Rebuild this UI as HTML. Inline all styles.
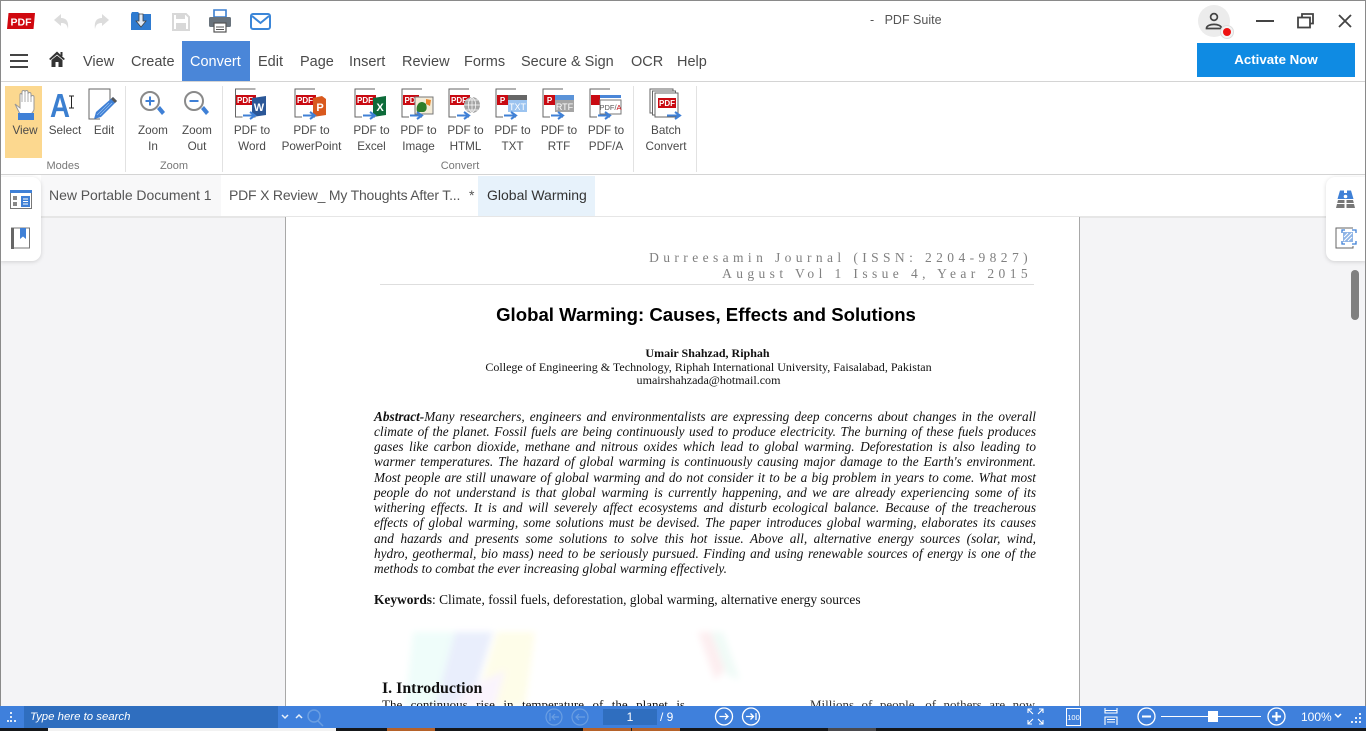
<!DOCTYPE html>
<html><head><meta charset="utf-8">
<style>
html,body{margin:0;padding:0;width:1366px;height:731px;overflow:hidden;background:#fff;font-family:"Liberation Sans",sans-serif;color:#444}
.a{position:absolute}
.m{position:absolute;top:53px;font-size:14.5px;line-height:18px;color:#4a4a4a;white-space:nowrap}
.l{position:absolute;font-size:11.7px;line-height:16px;color:#4a4a4a;text-align:center;width:80px;white-space:nowrap;margin-top:1px}
.g{position:absolute;top:159px;font-size:11px;line-height:14px;color:#777;text-align:center;width:80px}
.v{position:absolute;top:86px;width:1px;height:86px;background:#e2e2e2}
.t{position:absolute;top:186px;font-size:14px;line-height:18px;color:#555;white-space:nowrap}
.p{position:absolute;left:374px;width:662px;font:italic 13.3px/15.2px "Liberation Serif",serif;color:#111;text-align:justify;text-align-last:justify;white-space:nowrap;margin-top:-.5px}
.c{position:absolute;left:286px;width:845px;text-align:center;font-family:"Liberation Serif",serif;color:#111;font-size:12.05px;line-height:14px;white-space:nowrap}
svg{position:absolute;overflow:visible}
svg text{font-family:"Liberation Sans",sans-serif}
</style></head>
<body>
<!-- window frame -->
<div class="a" style="left:0;top:0;width:1366px;height:1px;background:#8a8a8a;z-index:9"></div>
<div class="a" style="left:0;top:0;width:1px;height:706px;background:#8a8a8a;z-index:9"></div>
<div class="a" style="left:1365px;top:0;width:1px;height:706px;background:#8a8a8a;z-index:9"></div>

<!-- quick access -->
<svg style="left:7px;top:13px" width="28" height="17"><path d="M1.500 0H28L26.500 16H0Z" fill="#d0080f"/><text x="14" y="12.500" font-size="10.500" font-weight="bold" fill="#fff" text-anchor="middle">PDF</text></svg>
<svg style="left:53px;top:13px" width="18" height="18"><path d="M1 7L8 1V5C13 5 16 8 15 16C14 11 12 10 8 10V13Z" fill="#dcdcdc"/></svg>
<svg style="left:92px;top:13px" width="18" height="18"><path d="M17 7L10 1V5C5 5 2 8 3 16C4 11 6 10 10 10V13Z" fill="#dcdcdc"/></svg>
<svg style="left:130px;top:11px" width="22" height="20"><path d="M1 3V19H21V3H10L8 1H2Z" fill="#2f7bd0"/><path d="M9 3H13V10H16L11 16L6 10H9Z" fill="#dfe9f5" stroke="#444" stroke-width=".8"/></svg>
<svg style="left:172px;top:13px" width="18" height="18"><path d="M1 1H14L17 4V17H1Z" fill="none" stroke="#d8d8d8" stroke-width="2"/><rect x="4" y="1" width="9" height="5" fill="#d8d8d8"/><rect x="4" y="10" width="10" height="6" fill="#d8d8d8"/></svg>
<svg style="left:209px;top:9px" width="23" height="24"><path d="M5 1H17V8H5Z" fill="#fff" stroke="#3b7fd0" stroke-width="1.600"/><rect x="0" y="8" width="22" height="10" rx="1.500" fill="#69737c"/><rect x="5" y="14" width="12" height="9" fill="#fff" stroke="#555" stroke-width="1.200"/><path d="M7 18H15M7 20.500H15" stroke="#555"/></svg>
<svg style="left:250px;top:12px" width="22" height="19"><rect x="1" y="2" width="19" height="15" rx="2" fill="none" stroke="#3b86d8" stroke-width="2"/><path d="M2 4L10.500 11L19 4" fill="none" stroke="#3b86d8" stroke-width="2"/></svg>

<div class="a" style="left:870px;top:12px;font-size:12.500px;line-height:16px;color:#555;white-space:pre">-   PDF Suite</div>

<!-- window controls -->
<div class="a" style="left:1198px;top:5px;width:32px;height:32px;border-radius:50%;background:#ececec"></div>
<svg style="left:1205px;top:12px" width="18" height="18"><circle cx="9" cy="5" r="3.400" fill="none" stroke="#444" stroke-width="1.700"/><path d="M1.500 16.500C1.500 11 16.500 11 16.500 16.500Z" fill="none" stroke="#444" stroke-width="1.700"/></svg>
<div class="a" style="left:1220px;top:25px;width:14px;height:14px;border-radius:50%;background:#f3f3f3;border:1px solid #ddd;box-sizing:border-box"></div>
<div class="a" style="left:1223px;top:28px;width:8px;height:8px;border-radius:50%;background:#ee1111"></div>
<div class="a" style="left:1256px;top:20px;width:18px;height:2px;background:#444"></div>
<svg style="left:1297px;top:13px" width="18" height="16"><rect x="1" y="4.500" width="12" height="10" fill="none" stroke="#444" stroke-width="1.800"/><path d="M5 4V1H16V10.500H13.500" fill="none" stroke="#444" stroke-width="1.800"/></svg>
<svg style="left:1338px;top:14px" width="14" height="14"><path d="M1 1L13 13M13 1L1 13" stroke="#444" stroke-width="1.800"/></svg>

<!-- menu -->
<div class="a" style="left:10px;top:54px;width:18px;height:2px;background:#444"></div>
<div class="a" style="left:10px;top:60px;width:18px;height:2px;background:#444"></div>
<div class="a" style="left:10px;top:66px;width:18px;height:2px;background:#444"></div>
<svg style="left:49px;top:51px" width="16" height="16"><path d="M0 8L8 0.500L16 8L14.500 9L8 3.500L1.500 9Z" fill="#333"/><path d="M2.500 9L8 4.500L13.500 9V16H9.500V11H6.500V16H2.500Z" fill="#333"/><rect x="11.500" y="1" width="2" height="4" fill="#333"/></svg>
<div class="a" style="left:182px;top:41px;width:68px;height:40px;background:#4a86d8"></div>
<div class="m" style="left:83px">View</div>
<div class="m" style="left:131px">Create</div>
<div class="m" style="left:190px;color:#fff">Convert</div>
<div class="m" style="left:258px">Edit</div>
<div class="m" style="left:300px">Page</div>
<div class="m" style="left:349px">Insert</div>
<div class="m" style="left:402px">Review</div>
<div class="m" style="left:464px">Forms</div>
<div class="m" style="left:521px">Secure &amp; Sign</div>
<div class="m" style="left:631px">OCR</div>
<div class="m" style="left:677px">Help</div>
<div class="a" style="left:1197px;top:43px;width:158px;height:34px;background:#0f8be3;color:#fff;font-weight:bold;font-size:13.300px;line-height:33px;text-align:center">Activate Now</div>
<div class="a" style="left:0;top:81px;width:1366px;height:1px;background:#d4d4d4"></div>

<!-- ribbon -->
<div class="a" style="left:5px;top:86px;width:37px;height:72px;background:#fcd88f"></div>
<svg style="left:12px;top:89px" width="24" height="32"><path d="M3 15L8 19V6C8 4 10 4 10 6V3C10 1 13 1 13 3V3C13 1 16 1 16 3V5C16 3 19 3 19 5V8C19 6 22 6 22 8V20C22 22 20 24 19 25H8Z" fill="#fff" stroke="#999" stroke-width="1"/><path d="M10 6V13M13 3V13M16 5V13M19 8V13" stroke="#999" stroke-width=".8"/><rect x="6" y="24" width="16" height="7" fill="#3f80d6"/></svg>
<div class="l" style="left:-15px;top:122px">View</div>
<svg style="left:50px;top:92px" width="28" height="26"><text x="0" y="25" font-size="33" font-weight="bold" fill="#3b7fd0" textLength="20" lengthAdjust="spacingAndGlyphs">A</text><path d="M19 4H24M21.500 4V16M19 16H24" stroke="#222" stroke-width="1" fill="none"/></svg>
<div class="l" style="left:25px;top:122px">Select</div>
<svg style="left:88px;top:88px" width="30" height="33"><path d="M22 14V1H1V31H12" fill="none" stroke="#666"/><path d="M25 9L29 13L13 29L6 31L8 24Z" fill="#3f80d6"/><path d="M25 9L29 13L27 15L23 11Z" fill="#555"/><path d="M21 15L9 27M24 15L12 27" stroke="#9cc4f0" stroke-width=".7"/></svg>
<div class="l" style="left:64px;top:122px">Edit</div>
<div class="v" style="left:125px"></div>
<svg style="left:139px;top:90px" width="28" height="28"><circle cx="11" cy="11" r="9" fill="#fff" stroke="#8a8a8a" stroke-width="2"/><path d="M6.500 11H15.500M11 6.500V15.500" stroke="#3f80d6" stroke-width="2"/><path d="M18 19L21 16L26 22L23 25Z" fill="#3f80d6"/></svg>
<div class="l" style="left:113px;top:122px;line-height:16px">Zoom<br>In</div>
<svg style="left:183px;top:90px" width="28" height="28"><circle cx="11" cy="11" r="9" fill="#fff" stroke="#8a8a8a" stroke-width="2"/><path d="M6.500 11H15.500" stroke="#3f80d6" stroke-width="2"/><path d="M18 19L21 16L26 22L23 25Z" fill="#3f80d6"/></svg>
<div class="l" style="left:157px;top:122px">Zoom<br>Out</div>
<div class="v" style="left:222px"></div>

<!-- PDF to Word -->
<svg style="left:234px;top:88px" width="34" height="32"><path d="M21 1H1V29H8M19 29H21" fill="none" stroke="#666" transform="translate(.5 0)"/><rect x="2" y="7" width="20" height="10" fill="#c90a12"/><text x="11" y="15" font-size="8" font-weight="bold" fill="#fff" text-anchor="middle">PDF</text><path d="M18 10L32 8V27L18 29Z" fill="#2b5797"/><text x="25" y="23" font-size="11" font-weight="bold" fill="#fff" text-anchor="middle">W</text><path d="M9 27.500H19M16 24L21 27.500L16 31" fill="none" stroke="#3f80d6" stroke-width="2"/></svg>
<div class="l" style="left:212px;top:122px">PDF to<br>Word</div>
<!-- PowerPoint -->
<svg style="left:294px;top:88px" width="34" height="32"><path d="M21 1H1V29H8M19 29H21" fill="none" stroke="#666"/><rect x="2" y="7" width="20" height="10" fill="#c90a12"/><text x="11" y="15" font-size="8" font-weight="bold" fill="#fff" text-anchor="middle">PDF</text><path d="M19 10L28 8L32 11V27L19 29Z" fill="#d9591e"/><text x="26" y="23" font-size="11" font-weight="bold" fill="#fff" text-anchor="middle">P</text><path d="M9 27.500H19M16 24L21 27.500L16 31" fill="none" stroke="#3f80d6" stroke-width="2"/></svg>
<div class="l" style="left:271.500px;top:122px">PDF to<br>PowerPoint</div>
<!-- Excel -->
<svg style="left:354px;top:88px" width="34" height="32"><path d="M21 1H1V29H8M19 29H21" fill="none" stroke="#666"/><rect x="2" y="7" width="20" height="10" fill="#c90a12"/><text x="11" y="15" font-size="8" font-weight="bold" fill="#fff" text-anchor="middle">PDF</text><path d="M19 10L32 8V27L19 29Z" fill="#0d6b3a"/><text x="26" y="23" font-size="11" font-weight="bold" fill="#fff" text-anchor="middle">X</text><path d="M9 27.500H19M16 24L21 27.500L16 31" fill="none" stroke="#3f80d6" stroke-width="2"/></svg>
<div class="l" style="left:331.500px;top:122px">PDF to<br>Excel</div>
<!-- Image -->
<svg style="left:401px;top:88px" width="34" height="32"><path d="M21 1H1V29H8M19 29H21" fill="none" stroke="#666"/><rect x="2" y="7" width="16" height="10" fill="#c90a12"/><text x="9" y="15" font-size="8" font-weight="bold" fill="#fff" text-anchor="middle">PD</text><rect x="14" y="9" width="18" height="17" fill="#f4ecd8" stroke="#777"/><path d="M16 24C14 16 20 11 25 16C27 22 24 24 22 24Z" fill="#2f7d2a"/><path d="M25 11L30 12L29 18L25 16Z" fill="#e9852b"/><path d="M9 27.500H19M16 24L21 27.500L16 31" fill="none" stroke="#3f80d6" stroke-width="2"/></svg>
<div class="l" style="left:378.500px;top:122px">PDF to<br>Image</div>
<!-- HTML -->
<svg style="left:448px;top:88px" width="34" height="32"><path d="M21 1H1V29H8M19 29H21" fill="none" stroke="#666"/><rect x="2" y="7" width="20" height="10" fill="#c90a12"/><text x="11" y="15" font-size="8" font-weight="bold" fill="#fff" text-anchor="middle">PDF</text><circle cx="24" cy="17" r="8" fill="#a5a5a5"/><path d="M16 17H32M24 9V25M18 12H30M18 22H30M24 9C19 13 19 21 24 25C29 21 29 13 24 9" fill="none" stroke="#fff" stroke-width=".7"/><path d="M9 27.500H19M16 24L21 27.500L16 31" fill="none" stroke="#3f80d6" stroke-width="2"/></svg>
<div class="l" style="left:425.500px;top:122px">PDF to<br>HTML</div>
<!-- TXT -->
<svg style="left:495px;top:88px" width="34" height="32"><path d="M21 1H1V29H8M19 29H21" fill="none" stroke="#666"/><rect x="2" y="7" width="11" height="10" fill="#c90a12"/><text x="7.500" y="15" font-size="8" font-weight="bold" fill="#fff" text-anchor="middle">P</text><rect x="13" y="7" width="19" height="5" fill="#666"/><rect x="13" y="12" width="19" height="12" fill="#9cc4f0"/><text x="22.500" y="22" font-size="9" fill="#fff" text-anchor="middle">TXT</text><path d="M9 27.500H19M16 24L21 27.500L16 31" fill="none" stroke="#3f80d6" stroke-width="2"/></svg>
<div class="l" style="left:472.500px;top:122px">PDF to<br>TXT</div>
<!-- RTF -->
<svg style="left:542px;top:88px" width="34" height="32"><path d="M21 1H1V29H8M19 29H21" fill="none" stroke="#666"/><rect x="2" y="7" width="11" height="10" fill="#c90a12"/><text x="7.500" y="15" font-size="8" font-weight="bold" fill="#fff" text-anchor="middle">P</text><rect x="13" y="7" width="19" height="5" fill="#5b93d8"/><rect x="13" y="12" width="19" height="12" fill="#a5a5a5"/><text x="22.500" y="22" font-size="9" fill="#fff" text-anchor="middle">RTF</text><path d="M9 27.500H19M16 24L21 27.500L16 31" fill="none" stroke="#3f80d6" stroke-width="2"/></svg>
<div class="l" style="left:519px;top:122px">PDF to<br>RTF</div>
<!-- PDF/A -->
<svg style="left:589px;top:88px" width="34" height="32"><path d="M21 1H1V29H8M19 29H21" fill="none" stroke="#666"/><rect x="2" y="7" width="9" height="10" fill="#c90a12"/><rect x="11" y="7" width="21" height="3" fill="#4a86d8"/><rect x="11" y="12" width="21" height="14" fill="#fff" stroke="#777"/><text x="21.500" y="22" font-size="7.500" fill="#555" text-anchor="middle">PDF/<tspan fill="#c90a12">A</tspan></text><path d="M9 27.500H19M16 24L21 27.500L16 31" fill="none" stroke="#3f80d6" stroke-width="2"/></svg>
<div class="l" style="left:566px;top:122px">PDF to<br>PDF/A</div>
<div class="v" style="left:633px"></div>
<!-- Batch -->
<svg style="left:649px;top:88px" width="34" height="32"><rect x="1" y="1" width="23" height="24" fill="#fff" stroke="#666"/><rect x="3.500" y="3" width="23" height="24" fill="#fff" stroke="#666"/><rect x="6" y="5" width="23" height="24" fill="#fff" stroke="#666"/><rect x="9" y="10" width="18" height="10" fill="#c90a12"/><text x="18" y="18" font-size="8" font-weight="bold" fill="#fff" text-anchor="middle">PDF</text><path d="M18 27.500H29M26 24L31 27.500L26 31" fill="none" stroke="#3f80d6" stroke-width="2"/></svg>
<div class="l" style="left:626px;top:122px">Batch<br>Convert</div>
<div class="v" style="left:696px"></div>
<div class="g" style="left:23px">Modes</div>
<div class="g" style="left:134px">Zoom</div>
<div class="g" style="left:420px">Convert</div>
<div class="a" style="left:0;top:174px;width:1366px;height:1px;background:#d4d4d4"></div>

<!-- tabs row -->
<div class="a" style="left:41px;top:175px;width:180px;height:41px;background:#f8f8f9"></div>
<div class="a" style="left:478px;top:176px;width:117px;height:40px;background:#e7f2fb"></div>
<div class="t" style="left:49px;letter-spacing:-.04px">New Portable Document 1</div>
<div class="t" style="left:229px;letter-spacing:-.2px">PDF X Review_ My Thoughts After T...</div>
<div class="t" style="left:469px">*</div>
<div class="t" style="left:487px;color:#333">Global Warming</div>

<!-- workspace -->
<div class="a" style="left:0;top:216px;width:1366px;height:490px;background:#f4f4f6;border-top:2px solid #e6e6e6;box-sizing:border-box"></div>
<div class="a" style="left:285px;top:217px;width:795px;height:489px;background:#fff;border-left:1px solid #a8a8a8;border-right:1px solid #a8a8a8;box-sizing:border-box"></div>

<!-- side panels -->
<div class="a" style="left:0;top:177px;width:41px;height:84px;background:#fff;border-radius:0 9px 9px 0;box-shadow:0 1px 4px rgba(0,0,0,.15)"></div>
<svg style="left:10px;top:190px" width="23" height="20"><rect x=".5" y=".5" width="21" height="18" fill="#fff" stroke="#777"/><rect x="0" y="0" width="22" height="3" fill="#3f80d6"/><rect x="3" y="6" width="4" height="4" fill="#888"/><rect x="3" y="12" width="4" height="4" fill="#888"/><rect x="11" y="6" width="9" height="11" fill="#3f80d6"/><path d="M13 9H18M13 11.500H18M13 14H18" stroke="#fff"/></svg>
<svg style="left:11px;top:227px" width="20" height="23"><rect x=".5" y="1" width="18" height="20" fill="#fff" stroke="#777"/><rect x="0" y="1" width="3" height="21" fill="#666"/><path d="M9 1H15V12L12 9.500L9 12Z" fill="#3f80d6"/></svg>
<div class="a" style="left:1326px;top:177px;width:40px;height:84px;background:#fff;border-radius:9px 0 0 9px;box-shadow:0 1px 4px rgba(0,0,0,.15)"></div>
<svg style="left:1336px;top:190px" width="20" height="19"><path d="M4 0.500H8V3H11V0.500H15L17.500 9H1.500Z" fill="#3f80d6"/><circle cx="9.500" cy="6.500" r="1.800" fill="#fff"/><path d="M2 10H8.500V13H1.200ZM10.500 10H17L17.800 13H10.500ZM1 14H8.500V18H0ZM10.500 14H18L19 18H10.500Z" fill="#777"/></svg>
<svg style="left:1335px;top:227px" width="23" height="22"><path d="M18 1H1V21H18V19" fill="none" stroke="#666"/><rect x="8" y="5" width="10" height="10" fill="#8fb4e6"/><path d="M9 14L17 6M9 10L13 6M13 14L17 10" stroke="#fff"/><path d="M7 6V3H10M17 3H21V6M21 14V17H17M10 17H7V14" fill="none" stroke="#3f80d6" stroke-width="1.300"/></svg>
<div class="a" style="left:1351px;top:270px;width:8px;height:50px;border-radius:4px;background:#808080"></div>

<!-- document -->
<div class="a" style="left:380px;top:248.500px;width:652px;text-align:right;font:13.500px/17px 'Liberation Serif',serif;letter-spacing:4.400px;color:#808080;white-space:nowrap">Durreesamin Journal (ISSN: 2204-9827)</div>
<div class="a" style="left:380px;top:265px;width:652px;text-align:right;font:13.500px/17px 'Liberation Serif',serif;letter-spacing:4.400px;color:#808080;white-space:nowrap">August Vol 1 Issue 4, Year 2015</div>
<div class="a" style="left:380px;top:284px;width:654px;height:1px;background:#dedede"></div>
<div class="a" style="left:286px;top:303.500px;width:840px;text-align:center;font:bold 18.600px/22px 'Liberation Sans',sans-serif;color:#000;white-space:nowrap">Global Warming: Causes, Effects and Solutions</div>
<div class="c" style="left:285px;top:345.500px;font-weight:bold;font-size:12px">Umair Shahzad, Riphah</div>
<div class="c" style="left:286px;top:360px">College of Engineering &amp; Technology, Riphah International University, Faisalabad, Pakistan</div>
<div class="c" style="left:286px;top:373px">umairshahzada@hotmail.com</div>

<div class="p" style="top:409px"><b>Abstract-</b>Many researchers, engineers and environmentalists are expressing deep concerns about changes in the overall</div>
<div class="p" style="top:424px">climate of the planet. Fossil fuels are being continuously used to produce electricity. The burning of these fuels produces</div>
<div class="p" style="top:439.500px">gases like carbon dioxide, methane and nitrous oxides which lead to global warming. Deforestation is also leading to</div>
<div class="p" style="top:454.500px">warmer temperatures. The hazard of global warming is continuously causing major damage to the Earth's environment.</div>
<div class="p" style="top:470px">Most people are still unaware of global warming and do not consider it to be a big problem in years to come. What most</div>
<div class="p" style="top:485px">people do not understand is that global warming is currently happening, and we are already experiencing some of its</div>
<div class="p" style="top:500.500px">withering effects. It is and will severely affect ecosystems and disturb ecological balance. Because of the treacherous</div>
<div class="p" style="top:515.500px">effects of global warming, some solutions must be devised. The paper introduces global warming, elaborates its causes</div>
<div class="p" style="top:531px">and hazards and presents some solutions to solve this hot issue. Above all, alternative energy sources (solar, wind,</div>
<div class="p" style="top:546px">hydro, geothermal, bio mass) need to be seriously pursued. Finding and using renewable sources of energy is one of the</div>
<div class="p" style="top:561.500px;text-align-last:left">methods to combat the ever increasing global warming effectively.</div>
<div class="p" style="top:592.500px;font-style:normal;text-align-last:left;font-size:13.400px"><b>Keywords</b>: Climate, fossil fuels, deforestation, global warming, alternative energy sources</div>

<!-- faint watermark -->
<svg style="left:405px;top:630px" width="340" height="76">
<defs><filter id="b" x="-20%" y="-20%" width="140%" height="140%"><feGaussianBlur stdDeviation="3.500"/></filter></defs>
<g filter="url(#b)">
<path d="M8 2H50L32 76H0Z" fill="#effdfa"/>
<path d="M50 2H88L70 60L45 76H30Z" fill="#e9eefc"/>
<path d="M92 2H130L120 76H70Z" fill="#fefde9"/>
<path d="M60 60L100 40L90 76H50Z" fill="#faf4fd"/>
<path d="M293 2H306L320 40L310 50Z" fill="#fdeef0"/>
<path d="M306 2H318L335 50L322 45Z" fill="#f0fbf7"/>
</g>
</svg>
<div class="a" style="left:382px;top:680px;font:bold 15.900px/17px 'Liberation Serif',serif;color:#111;white-space:nowrap">I. Introduction</div>
<div class="a" style="left:382px;top:697px;width:303px;font:13px/15px 'Liberation Serif',serif;color:#111;text-align:justify;text-align-last:justify;white-space:nowrap">The continuous rise in temperature of the planet is</div>
<div class="a" style="left:810px;top:697px;width:225px;font:13px/15px 'Liberation Serif',serif;color:#333;text-align:justify;text-align-last:justify;white-space:nowrap">Millions of people, of nothers are now</div>

<!-- status bar -->
<div class="a" style="left:0;top:706px;width:1366px;height:22px;background:#3f80dc"></div>
<div class="a" style="left:24px;top:706px;width:254px;height:22px;background:#2f6ebf"></div>
<div class="a" style="left:30px;top:709px;font:italic 11.400px/17px 'Liberation Sans',sans-serif;color:#fff;white-space:nowrap">Type here to search</div>
<svg style="left:7px;top:711px" width="12" height="13" fill="#dfeaf8"><rect x="3" y="1" width="2" height="2"/><rect x="3" y="5" width="2" height="2"/><rect x="0" y="9" width="2" height="2"/><rect x="3" y="9" width="2" height="2"/><rect x="7" y="9" width="2" height="2"/></svg>
<svg style="left:281px;top:712px" width="22" height="10" fill="none" stroke="#e8f0fa" stroke-width="1.500"><path d="M1 3L4 6L7 3M15 6L18 3L21 6"/></svg>
<svg style="left:306px;top:708px" width="20" height="19" fill="none" stroke="#6a9ee2" stroke-width="1.500"><circle cx="8" cy="8" r="6"/><path d="M12 13L17 18"/></svg>
<svg style="left:545px;top:708px" width="46" height="18" fill="none" stroke="#6a9ee2" stroke-width="1.200"><circle cx="9" cy="9" r="8"/><path d="M5 5V13M14 9H7M10 6L7 9L10 12"/><circle cx="35" cy="9" r="8"/><path d="M40 9H31M34 6L31 9L34 12"/></svg>
<div class="a" style="left:603px;top:709px;width:54px;height:16px;background:#2f6ebf;color:#fff;font-size:12px;line-height:16px;text-align:center">1</div>
<div class="a" style="left:660px;top:709px;color:#fff;font-size:12px;line-height:16px">/ 9</div>
<svg style="left:714px;top:707px" width="46" height="19" fill="none" stroke="#fff" stroke-width="1.300"><circle cx="10" cy="9.500" r="8.500"/><path d="M5.500 9.500H14M11 6.500L14 9.500L11 12.500"/><circle cx="37" cy="9.500" r="8.500"/><path d="M32 9.500H39M36.500 6.500L39.500 9.500L36.500 12.500M42 6V13"/></svg>
<svg style="left:1027px;top:708px" width="17" height="17" fill="none" stroke="#fff" stroke-width="1.100"><path d="M1 5V1H5M1 1L6 6M12 1H16V5M16 1L11 6M1 12V16H5M1 16L6 11M16 12V16H12M16 16L11 11"/></svg>
<div class="a" style="left:1066px;top:708px;width:15px;height:18px;border:1px solid #fff;color:#fff;font-size:7.500px;line-height:18px;text-align:center;box-sizing:border-box">100</div>
<svg style="left:1104px;top:708px" width="15" height="18" fill="none" stroke="#fff" stroke-width="1.100"><path d="M1 0V5H13V0M1 17V9H13V17M1 2.500H13M3 11.500H11M3 14H11"/></svg>
<svg style="left:1137px;top:707px" width="19" height="19" fill="none" stroke="#fff" stroke-width="1.300"><circle cx="9.500" cy="9.500" r="8.500"/><path d="M5 9.500H14" stroke-width="2"/></svg>
<div class="a" style="left:1161px;top:716px;width:100px;height:1px;background:#fff"></div>
<div class="a" style="left:1208px;top:711px;width:10px;height:11px;background:#fff"></div>
<svg style="left:1267px;top:707px" width="19" height="19" fill="none" stroke="#fff" stroke-width="1.300"><circle cx="9.500" cy="9.500" r="8.500"/><path d="M5 9.500H14M9.500 5V14" stroke-width="2"/></svg>
<div class="a" style="left:1301px;top:709px;color:#fff;font-size:12px;line-height:16px">100%</div>
<svg style="left:1334px;top:713px" width="8" height="7" fill="none" stroke="#fff" stroke-width="1.500"><path d="M1 1L4 4L7 1"/></svg>
<svg style="left:1351px;top:713px" width="12" height="12" fill="#e6eefa"><rect x="8" y="0" width="2" height="2"/><rect x="4" y="4" width="2" height="2"/><rect x="8" y="4" width="2" height="2"/><rect x="0" y="8" width="2" height="2"/><rect x="4" y="8" width="2" height="2"/><rect x="8" y="8" width="2" height="2"/></svg>

<!-- taskbar sliver -->
<div class="a" style="left:0;top:728px;width:1366px;height:3px;background:#15171a"></div>
<div class="a" style="left:48px;top:728px;width:288px;height:3px;background:#f2f2f2"></div>
<div class="a" style="left:387px;top:728px;width:48px;height:3px;background:#b5622a"></div>
<div class="a" style="left:583px;top:728px;width:97px;height:3px;background:#b5622a"></div>
<div class="a" style="left:631px;top:728px;width:1px;height:3px;background:#222"></div>
<div class="a" style="left:828px;top:728px;width:48px;height:3px;background:#4a4a4e"></div>
</body></html>
